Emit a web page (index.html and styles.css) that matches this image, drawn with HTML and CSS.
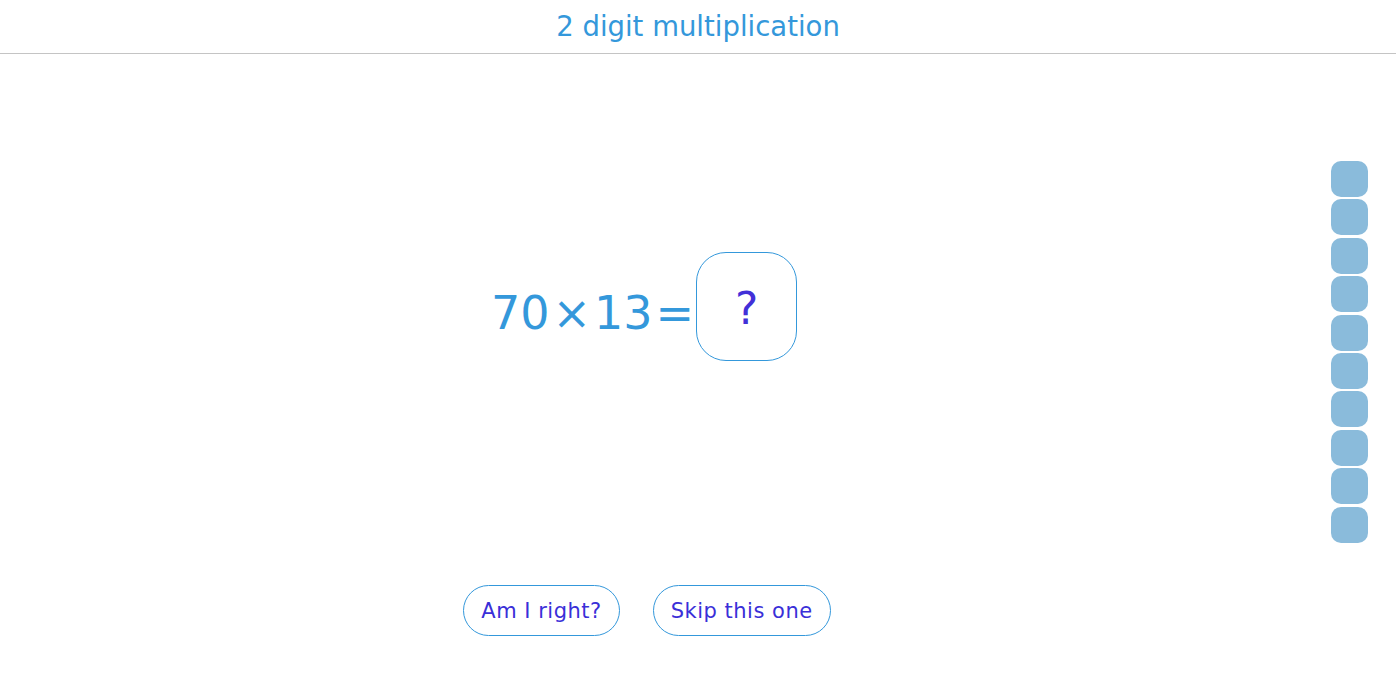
FILE: index.html
```html
<!DOCTYPE html>
<html lang="en">
<head>
    <meta charset="UTF-8">
    <title>2 digit multiplication</title>
    <link rel="stylesheet" href="styles.css">
</head>
<body>

<div class="header">
    <h1>2 digit multiplication</h1>
</div>

<div class="page">
    <div class="main">
        <div class="question">
            <div class="sum">
                <span>70</span>
                <span>&times;</span>
                <span>13</span>
                <span>=</span>
            </div>
            <div class="answer">?</div>
        </div>
        <div class="buttons">
            <button class="btn">Am I right?</button>
            <button class="btn">Skip this one</button>
        </div>
    </div>
    <div class="progress">
        <div class="step"></div>
        <div class="step"></div>
        <div class="step"></div>
        <div class="step"></div>
        <div class="step"></div>
        <div class="step"></div>
        <div class="step"></div>
        <div class="step"></div>
        <div class="step"></div>
        <div class="step"></div>
    </div>
</div>

</body>
</html>
```

FILE: styles.css
```css
body {
    margin: 0;
    font-family: "DejaVu Sans", Verdana, sans-serif;
    background: #fff;
}
.header {
    height: 53px;
    border-bottom: 1px solid #c4c4c4;
    text-align: center;
}
.header h1 {
    margin: 0;
    padding-top: 10px;
    font-size: 27.5px;
    font-weight: normal;
    color: #3498db;
}
.page {
    display: grid;
    grid-template-columns: 1fr 102px;
}
.main {
    display: flex;
    flex-direction: column;
    align-items: center;
    padding-top: 198px;
}
.question {
    display: flex;
    align-items: center;
    margin-right: 6px;
}
.sum {
    display: flex;
    gap: 3px;
    color: #3498db;
    font-size: 46px;
    padding-top: 12px;
}
.answer {
    width: 99px;
    height: 103px;
    padding-top: 4px;
    border: 1px solid #3498db;
    border-radius: 30px;
    display: flex;
    align-items: center;
    justify-content: center;
    color: #4230d8;
    font-size: 44px;
    margin-left: 2px;
}
.buttons {
    display: flex;
    gap: 33px;
    margin-top: 224px;
}
.btn {
    font-family: "DejaVu Sans", Verdana, sans-serif;
    font-size: 21px;
    letter-spacing: 0.5px;
    color: #3a2fd8;
    background: #fff;
    border: 1px solid #3498db;
    border-radius: 26px;
    height: 51px;
    padding: 0 17px;
}
.progress {
    display: flex;
    flex-direction: column;
    gap: 2.4px;
    padding-top: 107px;
    padding-left: 37px;
}
.step {
    width: 37px;
    height: 36px;
    background: #8abbdb;
    border-radius: 10px;
}
```
